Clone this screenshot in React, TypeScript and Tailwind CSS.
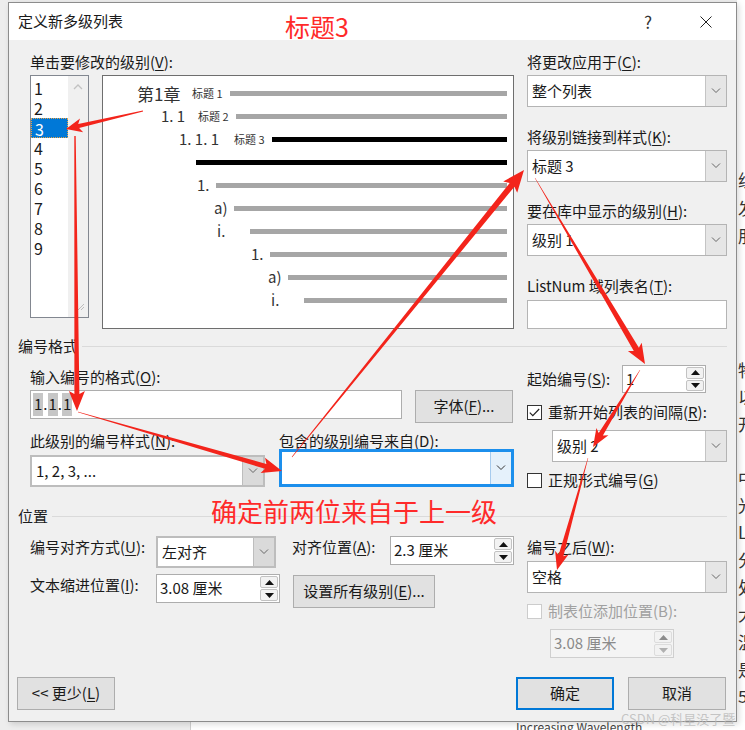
import React from "react";

const FONT = { fontFamily: '"Noto Sans CJK SC", "Noto Sans", sans-serif' };

function arrowPts(x1: number, y1: number, x2: number, y2: number, w0: number, w1: number, hl: number, hw: number, notch = 3) {
  const dx = x2 - x1;
  const dy = y2 - y1;
  const len = Math.hypot(dx, dy);
  const ux = dx / len;
  const uy = dy / len;
  const nx = -uy;
  const ny = ux;
  const bx = x2 - ux * hl;
  const by = y2 - uy * hl;
  const jx = bx + ux * notch;
  const jy = by + uy * notch;
  const pts = [
    [x1 + (nx * w0) / 2, y1 + (ny * w0) / 2],
    [jx + (nx * w1) / 2, jy + (ny * w1) / 2],
    [bx + (nx * hw) / 2, by + (ny * hw) / 2],
    [x2, y2],
    [bx - (nx * hw) / 2, by - (ny * hw) / 2],
    [jx - (nx * w1) / 2, jy - (ny * w1) / 2],
    [x1 - (nx * w0) / 2, y1 - (ny * w0) / 2],
  ];
  return pts.map((p) => p.map((v) => v.toFixed(1)).join(",")).join(" ");
}

const arrows = [
  [143, 111, 66, 129, 1, 4, 16, 14],
  [75, 136, 77, 411, 1.5, 5, 20, 16],
  [78, 412, 282, 471, 0.5, 5, 20, 16],
  [292, 457, 524, 170, 0.5, 6, 22, 18],
  [535, 178, 645, 364, 0.5, 6, 20, 16],
  [640, 370, 593, 447, 0.5, 5, 18, 14],
  [588, 458, 557, 570, 0.5, 5, 18, 14],
];

function Label({ children, className = "" }: { children: React.ReactNode; className?: string }) {
  return <div className={`h-[20px] whitespace-nowrap text-[15px] leading-[20px] text-[#1a1a1a] ${className}`}>{children}</div>;
}

function Chevron({ color = "#606060" }: { color?: string }) {
  return (
    <svg width="10" height="6" viewBox="0 0 10 6">
      <path d="M1 0.5l4 4 4-4" fill="none" stroke={color} strokeWidth="1" />
    </svg>
  );
}

function Select({ text, className = "", variant = "normal" }: { text?: string; className?: string; variant?: "normal" | "combo" | "focus" }) {
  const outer =
    variant === "combo"
      ? "border-2 border-[#bdbdbd]"
      : variant === "focus"
      ? "border-[3px] border-[#1c8fec]"
      : "border border-[#b4b4b4]";
  const btn =
    variant === "combo"
      ? "bg-[#dadada] border-l border-[#bdbdbd]"
      : variant === "focus"
      ? "bg-[#e5f1fb] border-l border-[#a6cbee]"
      : "bg-[#e6e6e6] border-l border-[#c4c4c4]";
  return (
    <div className={`flex bg-white ${outer} ${className}`}>
      <div className="flex flex-1 items-center pl-[4px] text-[15px] text-[#1a1a1a]">{text}</div>
      <div className={`flex w-[21px] items-center justify-center ${btn}`}>
        <Chevron color={variant === "focus" ? "#333" : "#666"} />
      </div>
    </div>
  );
}

function Tri({ up, color }: { up?: boolean; color: string }) {
  return (
    <svg width="9" height="5" viewBox="0 0 9 5">
      <path d={up ? "M0 5L4.5 0L9 5Z" : "M0 0L4.5 5L9 0Z"} fill={color} />
    </svg>
  );
}

function Spin({ text, className = "", disabled = false }: { text: string; className?: string; disabled?: boolean }) {
  const c = disabled ? "#8c8c8c" : "#111";
  return (
    <div className={`flex border ${disabled ? "border-[#cfcfcf] bg-[#f4f4f4]" : "border-[#adadad] bg-white"} ${className}`}>
      <div className={`flex flex-1 items-center pl-[3px] text-[15px] ${disabled ? "text-[#8a8a8a]" : "text-[#1a1a1a]"}`}>{text}</div>
      <div className="flex w-[20px] flex-col gap-px p-px">
        <div className={`flex flex-1 items-center justify-center rounded-[2px] border ${disabled ? "border-[#dcdcdc]" : "border-[#c2c2c2]"} bg-[#f2f2f2]`}>
          <Tri up color={c} />
        </div>
        <div className={`flex flex-1 items-center justify-center rounded-[2px] border ${disabled ? "border-[#dcdcdc]" : "border-[#c2c2c2]"} bg-[#f2f2f2]`}>
          <Tri color={disabled ? "#b0b0b0" : c} />
        </div>
      </div>
    </div>
  );
}

function Button({ children, className = "", primary = false }: { children: React.ReactNode; className?: string; primary?: boolean }) {
  return (
    <div
      className={`flex h-[33px] items-center justify-center bg-[#e1e1e1] text-[15px] text-[#1a1a1a] ${
        primary ? "border-2 border-[#0078d7]" : "border border-[#adadad]"
      } ${className}`}
    >
      {children}
    </div>
  );
}

function Check({ checked = false, disabled = false, label }: { checked?: boolean; disabled?: boolean; label: React.ReactNode }) {
  return (
    <div className="flex h-[20px] items-center">
      <div className={`flex h-[15px] w-[15px] items-center justify-center border bg-white ${disabled ? "border-[#cccccc]" : "border-[#333]"}`}>
        {checked && (
          <svg width="11" height="9" viewBox="0 0 11 9">
            <path d="M0.8 4.6l3 3 6.4-6.6" fill="none" stroke="#222" strokeWidth="1.2" />
          </svg>
        )}
      </div>
      <span className={`ml-[6px] whitespace-nowrap text-[15px] ${disabled ? "text-[#a0a0a0]" : "text-[#1a1a1a]"}`}>{label}</span>
    </div>
  );
}

function Separator({ title, className = "" }: { title: string; className?: string }) {
  return (
    <div className={`-ml-[12px] flex h-[20px] items-center ${className}`}>
      <span className="whitespace-nowrap text-[15px] text-[#1a1a1a]">{title}</span>
      <div className="ml-[4px] h-px flex-1 bg-[#dadada]" />
    </div>
  );
}

type Row = { num?: string; numX?: number; label?: string; labelX?: number; barX: number; black?: boolean; big?: boolean };

const rows: Row[] = [
  { num: "第1章", numX: 137, label: "标题 1", labelX: 192, barX: 230, big: true },
  { num: "1. 1", numX: 161, label: "标题 2", labelX: 198, barX: 236 },
  { num: "1. 1. 1", numX: 179, label: "标题 3", labelX: 234, barX: 272, black: true },
  { barX: 196, black: true },
  { num: "1.", numX: 197, barX: 216 },
  { num: "a)", numX: 214, barX: 234 },
  { num: "i.", numX: 217, barX: 250 },
  { num: "1.", numX: 251, barX: 270 },
  { num: "a)", numX: 268, barX: 288 },
  { num: "i.", numX: 271, barX: 304 },
];

function Preview() {
  return (
    <div className="ml-[13px] h-[254px] w-[412px] border border-[#6e6e6e] bg-white pt-[6px] pr-[6px]">
      {rows.map((r, i) => {
        const start = r.numX ?? r.barX;
        return (
          <div key={i} className="flex h-[23px] items-center" style={{ paddingLeft: start - 103 }}>
            {r.num && (
              <span
                className={`whitespace-nowrap text-[#333] ${r.big ? "text-[17px]" : "text-[15px]"}`}
                style={{ width: (r.labelX ?? r.barX) - (r.numX ?? 0) }}
              >
                {r.num}
              </span>
            )}
            {r.label && (
              <span className="whitespace-nowrap text-[11px] text-[#333]" style={{ width: r.barX - (r.labelX ?? 0) }}>
                {r.label}
              </span>
            )}
            <div className={`h-[5px] flex-1 ${r.black ? "bg-black" : "bg-[#a6a6a6]"}`} />
          </div>
        );
      })}
    </div>
  );
}

function LevelList() {
  return (
    <div className="flex h-[243px] w-[59px] border border-[#828790] bg-white">
      <div className="w-[37px] pt-[2px]">
        {["1", "2", "3", "4", "5", "6", "7", "8", "9"].map((n) => (
          <div
            key={n}
            className={`h-[20px] pl-[3px] text-[16px] leading-[20px] ${
              n === "3" ? "border border-dotted border-[#e7a34a] bg-[#0078d7] pl-[2px] text-white" : "text-[#1a1a1a]"
            }`}
          >
            {n}
          </div>
        ))}
      </div>
      <div className="flex flex-1 flex-col items-center justify-between bg-[#f0f0f0] pt-[8px] pb-[6px]">
        <svg width="10" height="6" viewBox="0 0 10 6">
          <path d="M1 5l4-4 4 4" fill="none" stroke="#c2c2c2" strokeWidth="1.3" />
        </svg>
        <svg width="8" height="8" viewBox="0 0 8 8" className="self-end mr-[3px]">
          <path d="M7 1L1 7M7 4L4 7" stroke="#bdbdbd" strokeWidth="1" />
        </svg>
      </div>
    </div>
  );
}

const U = ({ children }: { children: React.ReactNode }) => <span className="underline underline-offset-2">{children}</span>;

export default function App() {
  const docChars = [
    [180, "组"], [208, "发"], [236, "朋"], [370, "物"], [397, "以"], [424, "开"], [478, "中"], [505, "光"],
    [532, "L"], [560, "分"], [587, "处"], [614, "大"], [642, "温"], [670, "是"], [696, "5"],
  ] as const;

  return (
    <div className="relative h-[730px] w-[745px] overflow-hidden bg-[#ededed]" style={FONT}>
      {/* document behind the dialog */}
      <div className="absolute top-0 left-[737px] h-[730px] w-[8px] bg-white" />
      <div className="absolute top-[722px] left-[190px] h-[8px] w-[555px] border-l border-[#cfcfcf] bg-white" />
      {docChars.map(([y, ch]) => (
        <span key={y} className="absolute left-[738px] text-[17px] leading-[20px] text-[#333]" style={{ top: y - 10 }}>
          {ch}
        </span>
      ))}
      <span className="absolute top-[718px] left-[516px] text-[12px] text-[#444]">Increasing Wavelength</span>

      {/* dialog */}
      <div className="relative ml-[8px] mt-[2px] flex h-[720px] w-[729px] flex-col border border-[#8c8c8c] bg-white shadow-[2px_2px_6px_rgba(0,0,0,0.15)]">
        <div className="flex h-[37px] items-center bg-white pl-[9px]">
          <span className="text-[15px] text-[#1a1a1a]">定义新多级列表</span>
          <div className="flex-1" />
          <span className="w-[12px] text-center text-[17px] text-[#333]">?</span>
          <svg className="ml-[46px] mr-[24px]" width="12" height="12" viewBox="0 0 12 12">
            <path d="M0.5 0.5l11 11M11.5 0.5l-11 11" stroke="#222" strokeWidth="1" />
          </svg>
        </div>

        <div className="flex flex-1 flex-col bg-[#f0f0f0] pt-[12px] pr-[9px] pl-[21px]">
          {/* top section */}
          <div className="flex">
            <div className="w-[484px]">
              <Label>
                单击要修改的级别(<U>V</U>):
              </Label>
              <div className="mt-[3px] flex">
                <LevelList />
                <Preview />
              </div>
            </div>
            <div className="ml-[13px] w-[200px]">
              <Label>
                将更改应用于(<U>C</U>):
              </Label>
              <Select className="mt-[3px] h-[32px]" text="整个列表" />
              <Label className="mt-[20px]">
                将级别链接到样式(<U>K</U>):
              </Label>
              <Select className="mt-[3px] h-[32px]" text="标题 3" />
              <Label className="mt-[19px]">
                要在库中显示的级别(<U>H</U>):
              </Label>
              <Select className="mt-[3px] h-[32px]" text="级别 1" />
              <Label className="mt-[20px]">
                ListNum 域列表名(<U>T</U>):
              </Label>
              <div className="mt-[4px] h-[29px] border border-[#b4b4b4] bg-white" />
            </div>
          </div>

          <Separator title="编号格式" className="mt-[7px]" />

          {/* number format */}
          <div className="flex">
            <div className="w-[484px]">
              <Label className="mt-[11px]">
                输入编号的格式(<U>O</U>):
              </Label>
              <div className="mt-[3px] flex h-[33px] items-start">
                <div className="flex h-[29px] w-[372px] items-center border border-[#adadad] bg-white pl-[2px] text-[15px] text-[#1a1a1a]">
                  <span className="bg-[#c6c6c6] px-px">1</span>.<span className="bg-[#c6c6c6] px-px">1</span>.
                  <span className="bg-[#c6c6c6] px-px">1</span>
                </div>
                <Button className="ml-[13px] w-[98px] h-[33px]">
                  字体(<U>F</U>)...
                </Button>
              </div>
              <div className="mt-[8px] flex h-[18px]">
                <Label className="w-[249px] h-[18px] leading-[18px]">
                  此级别的编号样式(<U>N</U>):
                </Label>
                <Label className="h-[18px] leading-[18px]">
                  包含的级别编号来自(<U>D</U>):
                </Label>
              </div>
              <div className="flex h-[38px] items-end">
                <Select variant="combo" className="h-[32px] w-[235px]" text="1, 2, 3, ..." />
                <Select variant="focus" className="ml-[14px] h-[38px] w-[235px]" />
              </div>
            </div>
            <div className="ml-[13px] w-[200px]">
              <div className="mt-[9px] flex h-[28px] items-center">
                <Label className="w-[95px]">
                  起始编号(<U>S</U>):
                </Label>
                <Spin className="h-[28px] w-[84px]" text="1" />
              </div>
              <div className="mt-[9px]">
                <Check
                  checked
                  label={
                    <>
                      重新开始列表的间隔(<U>R</U>):
                    </>
                  }
                />
              </div>
              <Select className="mt-[8px] ml-[25px] h-[32px]" text="级别 2" />
              <div className="mt-[8px]">
                <Check
                  label={
                    <>
                      正规形式编号(<U>G</U>)
                    </>
                  }
                />
              </div>
            </div>
          </div>

          <Separator title="位置" className="mt-[16px]" />

          {/* position */}
          <div className="flex">
            <div className="w-[484px]">
              <div className="mt-[10px] flex items-start">
                <Label className="mt-[1px] w-[126px]">
                  编号对齐方式(<U>U</U>):
                </Label>
                <Select variant="combo" className="h-[32px] w-[120px]" text="左对齐" />
                <Label className="mt-[1px] ml-[16px] w-[98px]">
                  对齐位置(<U>A</U>):
                </Label>
                <Spin className="h-[29px] w-[124px]" text="2.3 厘米" />
              </div>
              <div className="mt-[6px] flex items-start">
                <Label className="mt-[1px] w-[126px]">
                  文本缩进位置(<U>I</U>):
                </Label>
                <Spin className="h-[29px] w-[124px]" text="3.08 厘米" />
                <Button className="mt-[1px] ml-[13px] w-[142px]">
                  设置所有级别(<U>E</U>)...
                </Button>
              </div>
            </div>
            <div className="ml-[13px] w-[200px]">
              <Label className="mt-[11px]">
                编号之后(<U>W</U>):
              </Label>
              <Select className="mt-[4px] h-[32px]" text="空格" />
              <div className="mt-[8px]">
                <Check disabled label="制表位添加位置(B):" />
              </div>
              <Spin disabled className="mt-[8px] ml-[23px] h-[29px] w-[124px]" text="3.08 厘米" />
            </div>
          </div>

          {/* buttons */}
          <div className="mt-[19px] flex">
            <Button className="-ml-[13px] w-[98px]">
              &lt;&lt; 更少(<U>L</U>)
            </Button>
            <div className="flex-1" />
            <Button primary className="w-[98px]">
              确定
            </Button>
            <Button className="ml-[14px] mr-px w-[98px]">取消</Button>
          </div>
        </div>
      </div>

      {/* annotations */}
      <span className="absolute top-[9px] left-[285px] text-[25px] leading-[34px] text-[#ff2a2a]">标题3</span>
      <span className="absolute top-[494px] left-[211px] text-[26px] leading-[34px] text-[#ff2a2a]">确定前两位来自于上一级</span>
      <svg className="pointer-events-none absolute top-0 left-0" width="745" height="730">
        {arrows.map((a, i) => (
          <polygon key={i} points={arrowPts(a[0], a[1], a[2], a[3], a[4], a[5], a[6], a[7])} fill="#f3241b" />
        ))}
      </svg>
      <span className="absolute top-[709px] left-[621px] text-[13px] text-[#b8b8b8]/80">CSDN @科星没了暨</span>
    </div>
  );
}
